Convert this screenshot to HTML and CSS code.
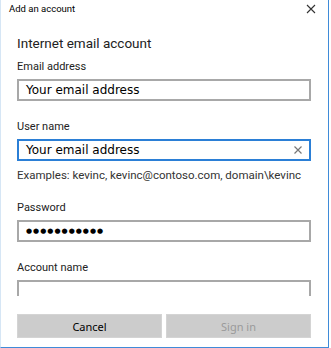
FILE: index.html
```html
<!DOCTYPE html>
<html lang="en">
<head>
    <meta charset="UTF-8">
    <title>Add an account</title>
    <link rel="stylesheet" href="styles.css">
</head>
<body>
    <div class="window">
        <div class="titlebar">
            <span class="title">Add an account</span>
            <span class="close">
                <svg width="10" height="10" viewBox="0 0 10 10"><path d="M1 1L9 9M9 1L1 9" stroke="#333" stroke-width="1.1"/></svg>
            </span>
        </div>

        <div class="content">
            <h1>Internet email account</h1>

            <div class="field">
                <label>Email address</label>
                <div class="input">Your email address</div>
            </div>

            <div class="field">
                <label>User name</label>
                <div class="input focus">
                    <span>Your email address</span>
                    <svg class="clear" width="8" height="8" viewBox="0 0 8 8"><path d="M0.5 0.5L7.5 7.5M7.5 0.5L0.5 7.5" stroke="#777" stroke-width="1.2"/></svg>
                </div>
                <div class="hint">Examples: kevinc, kevinc@contoso.com, domain\kevinc</div>
            </div>

            <div class="field">
                <label>Password</label>
                <div class="input dots">●●●●●●●●●●●</div>
            </div>

            <div class="field">
                <label>Account name</label>
                <div class="input"></div>
            </div>
        </div>

        <div class="buttons">
            <button class="btn">Cancel</button>
            <button class="btn disabled">Sign in</button>
        </div>
    </div>
</body>
</html>
```

FILE: styles.css
```css
body {
    margin: 0;
    background: #fff;
    font-family: Roboto, "Noto Sans", sans-serif;
    color: #000;
}

.window {
    box-sizing: border-box;
    width: 329px;
    height: 348px;
    border-left: 1px solid #d6e6f5;
    border-right: 1px solid #3f8bd8;
    border-bottom: 1px solid #3f8bd8;
    display: flex;
    flex-direction: column;
}

.titlebar {
    display: flex;
    justify-content: space-between;
    align-items: center;
    height: 17px;
    padding: 0 12px 0 8px;
}
.titlebar .title {
    font-size: 9.5px;
    color: #000;
}
.titlebar .close {
    display: flex;
}

.content {
    height: 279px;
    flex-shrink: 0;
    overflow: hidden;
    padding: 0 17px 0 16px;
}
.content h1 {
    font-size: 13.5px;
    line-height: 20px;
    font-weight: normal;
    margin: 16px 0 6px;
    color: #222;
}

.field {
    margin-bottom: 18px;
}
.field label {
    display: block;
    font-size: 11px;
    line-height: 15px;
    color: #222;
    margin-bottom: 5px;
}

.input {
    height: 22px;
    box-sizing: border-box;
    border: 2px solid #a8a8a8;
    display: flex;
    align-items: center;
    justify-content: space-between;
    padding: 0 7px;
    font-family: "DejaVu Sans", sans-serif;
    font-size: 12px;
    color: #000;
}
.input.focus {
    border-color: #2b7fd6;
}
.input.dots {
    font-size: 7px;
    letter-spacing: 1px;
}

.hint {
    font-size: 11.5px;
    line-height: 14px;
    color: #333;
    margin-top: 7px;
}

.buttons {
    display: flex;
    gap: 4px;
    padding: 18px 17px 0 16px;
}
.btn {
    flex: 1;
    height: 24px;
    background: #cccccc;
    border: 1px solid #d4d4d4;
    font-family: "Noto Sans", "Open Sans", sans-serif;
    font-size: 11px;
    color: #000;
}
.btn.disabled {
    color: #9a9a9a;
}
```
